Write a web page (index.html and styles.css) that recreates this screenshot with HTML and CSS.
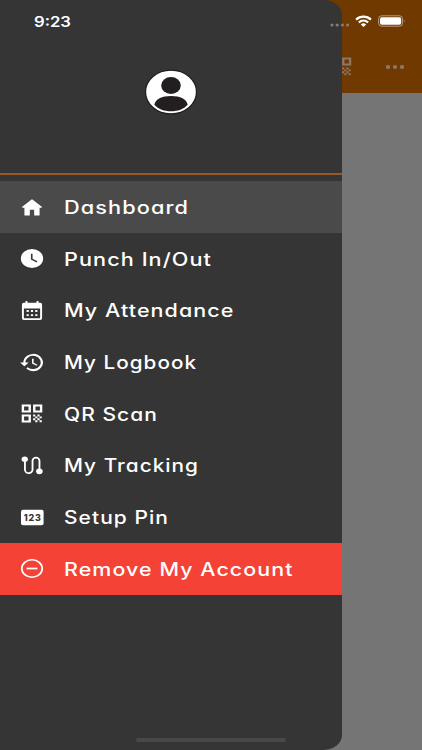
FILE: index.html
```html
<!DOCTYPE html>
<html lang="en">
<head>
<meta charset="utf-8">
<title>Menu</title>
<link rel="stylesheet" href="styles.css">
</head>
<body>
<svg class="defs" aria-hidden="true">
  <symbol id="qr" viewBox="0 0 24 24" preserveAspectRatio="none"><path fill-rule="evenodd" d="M2.500 2.500h8.500v8.500H2.500zm2.200 2.200v4.100h4.100V4.700zM13 2.500h8.500v8.500H13zm2.200 2.200v4.100h4.100V4.700zM2.500 13h8.500v8.500H2.500zm2.200 2.200v4.100h4.100v-4.100zM13 13h2v2h-2zM17 13h2v2h-2zM15 15h2v2h-2zM19 15h2v2h-2zM13 17h2v2h-2zM17 17h2v2h-2zM15 19h2v2h-2zM19 19h2v2h-2z"/></symbol>
</svg>
<div class="screen">
  <div class="appbar">
    <svg class="bar-qr"><use href="#qr"/></svg>
    <svg class="bar-more" viewBox="0 0 18 4"><ellipse cx="2" cy="2" rx="2.200" ry="1.900"/><ellipse cx="9" cy="2" rx="2.200" ry="1.900"/><ellipse cx="16" cy="2" rx="2.200" ry="1.900"/></svg>
  </div>
  <aside class="drawer">
    <header class="profile">
      <svg class="avatar" viewBox="0 0 54 46">
        <ellipse cx="27" cy="23" rx="25.500" ry="21.800" fill="#fff" stroke="#231f20" stroke-width="1.300"/>
        <ellipse cx="27" cy="16.500" rx="9.800" ry="8.400" fill="#231f20"/>
        <path d="M10.300 35.800C11.500 30 17.500 27 27 27s15.500 3 16.700 8.800C39.500 40.300 34 42.300 27 42.300S14.500 40.300 10.300 35.800z" fill="#231f20"/>
      </svg>
    </header>
    <nav class="menu">
      <a class="item active"><svg class="icon" viewBox="0 0 24 24" preserveAspectRatio="none"><path d="M10 19.800v-5.500h4v5.500q0 .6.600.6h3.800q.6 0 .6-.6v-7.500h1.700q1-.2.300-1L12.700 3.800q-.7-.6-1.400 0L3 11.300q-.7.800.3 1H5v7.500q0 .6.600.6h3.800q.6 0 .6-.6z"/></svg><svg class="label"><text y="25" textLength="125" lengthAdjust="spacingAndGlyphs">Dashboard</text></svg></a>
      <a class="item"><svg class="icon" viewBox="0 0 24 24" preserveAspectRatio="none"><path fill-rule="evenodd" d="M12 2a10.300 10 0 1 0 0 20 10.300 10 0 0 0 0-20zm4.200 14.200L11 13V7h1.500v5.200l4.500 2.700z"/></svg><svg class="label"><text y="25" textLength="148" lengthAdjust="spacingAndGlyphs">Punch In/Out</text></svg></a>
      <a class="item"><svg class="icon" viewBox="0 0 24 24" preserveAspectRatio="none"><path fill-rule="evenodd" d="M6 2h1.800v2h8.400V2H18v2h1.500A1.800 1.800 0 0 1 21.300 6v14a1.800 1.800 0 0 1-1.800 1.800h-15A1.800 1.800 0 0 1 2.700 20V6a1.800 1.800 0 0 1 1.800-2H6zM4.500 10v10h15V10z"/><path d="M7 11.500h2v2H7zm4 0h2v2h-2zm4 0h2v2h-2zM7 15.800h2v2H7zm4 0h2v2h-2zm4 0h2v2h-2z"/></svg><svg class="label"><text y="25" textLength="170.500" lengthAdjust="spacingAndGlyphs">My Attendance</text></svg></a>
      <a class="item"><svg class="icon" viewBox="0 0 24 24" preserveAspectRatio="none"><path d="M13 3c-5 0-9 4-9 9H1l3.900 3.900.1.100L9 12H6a7 7 0 1 1 2.100 4.900l-1.400 1.400A9 9 0 1 0 13 3zm-1 5v5l4.300 2.500.7-1.200-3.500-2.100V8z"/></svg><svg class="label"><text y="25" textLength="133" lengthAdjust="spacingAndGlyphs">My Logbook</text></svg></a>
      <a class="item"><svg class="icon"><use href="#qr"/></svg><svg class="label"><text y="25" textLength="94" lengthAdjust="spacingAndGlyphs">QR Scan</text></svg></a>
      <a class="item"><svg class="icon" viewBox="0 0 24 24" preserveAspectRatio="none"><path class="line" d="M5.500 5v11.500a3.500 3.500 0 0 0 7 0V7a3.200 3.200 0 0 1 6.400 0v11"/><circle cx="5.300" cy="5.500" r="2.900"/><circle cx="18.800" cy="18" r="3"/></svg><svg class="label"><text y="25" textLength="135" lengthAdjust="spacingAndGlyphs">My Tracking</text></svg></a>
      <a class="item"><svg class="icon" viewBox="0 0 26 23"><rect x="2" y="3.700" width="22.600" height="15.500" rx="2"/><text class="pin" x="4.700" y="14.700" textLength="18" lengthAdjust="spacingAndGlyphs">123</text></svg><svg class="label"><text y="25" textLength="105" lengthAdjust="spacingAndGlyphs">Setup Pin</text></svg></a>
      <a class="item danger"><svg class="icon" viewBox="0 0 24 24" preserveAspectRatio="none"><ellipse class="line" cx="12" cy="12" rx="9.400" ry="9.100"/><path d="M7 11.100h10v1.800H7z"/></svg><svg class="label"><text y="25" textLength="229.500" lengthAdjust="spacingAndGlyphs">Remove My Account</text></svg></a>
    </nav>
  </aside>
  <div class="status">
    <svg class="time"><text y="20.500" textLength="37" lengthAdjust="spacingAndGlyphs">9:23</text></svg>
    <div class="indicators">
      <svg class="signal" viewBox="0 0 19 4"><circle cx="2" cy="2" r="1.600"/><circle cx="7.200" cy="2" r="1.600"/><circle cx="12.400" cy="2" r="1.600"/><circle cx="17.500" cy="2" r="1.600"/></svg>
      <svg class="wifi" viewBox="0 0 17 12" preserveAspectRatio="none"><path d="M.3 3.800a12 12 0 0 1 16.400 0l-1.500 1.600a10 10 0 0 0-13.400 0zM3.100 6.700a8 8 0 0 1 10.800 0l-1.500 1.500a6 6 0 0 0-7.800 0zM5.800 9.400a4.200 4.200 0 0 1 5.400 0L8.500 12z"/></svg>
      <svg class="battery" viewBox="0 0 28 12"><rect x=".6" y=".8" width="24" height="10.400" rx="3" fill="none" stroke="#bd9b80"/><rect x="2" y="2.200" width="21.200" height="7.600" rx="1.800"/><path d="M26 4.200q1.300 1.800 0 3.600z" fill="#bd9b80"/></svg>
    </div>
  </div>
  <div class="home-bar"></div>
</div>
</body>
</html>
```

FILE: styles.css
```css
body {
  margin: 0;
  font-family: Inter, "Liberation Sans", sans-serif;
}

.defs {
  position: absolute;
  width: 0;
  height: 0;
}

.screen {
  position: relative;
  width: 422px;
  height: 750px;
  overflow: hidden;
  background: #757575;
}

.appbar {
  box-sizing: border-box;
  height: 93px;
  padding: 40px 18px 0 0;
  display: flex;
  justify-content: flex-end;
  align-items: center;
  gap: 32px;
  background: #6f3900;
  fill: #8b7768;
}

.bar-qr {
  width: 26px;
  height: 23px;
}

.bar-more {
  width: 18px;
  height: 4px;
}

/* Drawer lies over the dimmed page */
.drawer {
  position: absolute;
  inset: 0 auto 0 0;
  width: 342px;
  background: #353535;
  border-radius: 0 18px 18px 0 / 0 15px 15px 0;
  overflow: hidden;
}

.profile {
  box-sizing: border-box;
  height: 175px;
  padding-top: 69px;
  display: flex;
  justify-content: center;
  border-bottom: 2px solid #94592a;
}

.avatar {
  width: 54px;
  height: 46px;
}

.menu {
  padding-top: 6.200px;
  display: flex;
  flex-direction: column;
}

.item {
  height: 51.700px;
  box-sizing: border-box;
  padding-left: 19px;
  display: flex;
  align-items: center;
  gap: 19px;
  color: #fff;
}

.active {
  background: #4a4a4a;
}

.danger {
  background: #f44336;
}

.icon {
  width: 26px;
  height: 23px;
  fill: currentColor;
}

.line {
  fill: none;
  stroke: currentColor;
  stroke-width: 1.700;
}

.pin {
  fill: #353535;
  font-size: 8.500px;
  font-weight: 800;
  letter-spacing: 0.800px;
}

.label {
  width: 240px;
  height: 36px;
  overflow: visible;
}

.label text {
  fill: #fff;
  font-size: 18px;
  font-weight: 500;
  letter-spacing: 0.900px;
  font-feature-settings: "cv11";
}

/* System status bar lies over both layers */
.status {
  position: absolute;
  inset: 6px 16px auto 34px;
  height: 30px;
  display: flex;
  justify-content: space-between;
  align-items: center;
  fill: #fff;
}

.time {
  width: 60px;
  height: 30px;
  font-size: 14.500px;
  font-weight: 600;
}

.indicators {
  display: flex;
  align-items: center;
  gap: 6px;
}

.signal {
  width: 19px;
  height: 4px;
  margin-top: 8px;
  fill: #867a71;
}

.wifi {
  width: 17px;
  height: 12px;
}

.battery {
  width: 28px;
  height: 12px;
}

.home-bar {
  position: absolute;
  left: 136px;
  bottom: 8px;
  width: 150px;
  height: 4px;
  border-radius: 2px;
  background: #484848;
}
```
